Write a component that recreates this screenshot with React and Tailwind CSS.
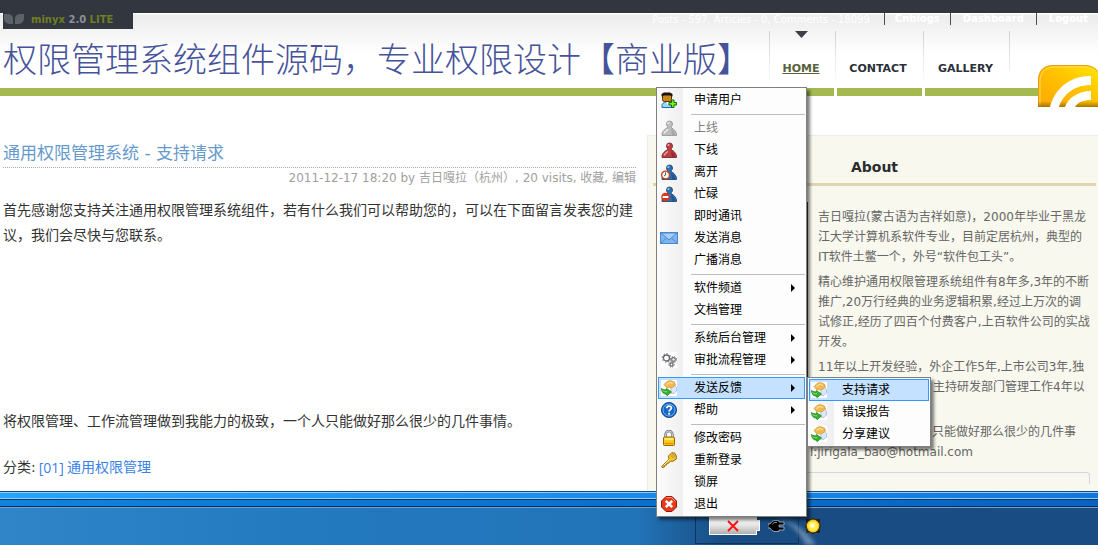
import React from "react";

function UserIcon({ light, mid, dark, children }) {
  return (
    <svg viewBox="0 0 16 16" className="h-4 w-4">
      <path
        d="M5.500 4a3 3 0 0 1 6 0c0 1.200-.5 2-1.200 2.600v1.200c2.700 1.200 4.200 3.200 5.200 5.700v2H1v-2c1-2.500 2.700-4.500 5.500-5.700V6.600C6 6 5.500 5.200 5.500 4z"
        fill={mid}
        stroke={dark}
        strokeWidth="0.8"
      />
      <path d="M7 4a1.500 1.500 0 0 1 1.500-1.600M3 13.500c1-2 2-3 4-4.200" stroke={light} strokeWidth="1.500" fill="none" />
      <path d="M10 9c2 1 3 2.500 4 4.500v1.500h-3z" fill={dark} fillOpacity="0.5" />
      {children}
    </svg>
  );
}

function AddUserIcon() {
  return (
    <svg viewBox="0 0 16 16" className="h-4 w-4">
      <path d="M1 15.500v-3L3.500 10h6l2 3v2.500z" fill="#9fd4f5" stroke="#1c6fb0" />
      <path d="M5 10l1.500 3L8 10z" fill="#fff" />
      <rect x="1.500" y="1.500" width="9" height="8" rx="2" fill="#c98a1c" stroke="#5a3200" />
      <path d="M.5 4.500V2L3 .500h6L11.500 2v2.500L9 3.500H3z" fill="#1d1408" />
      <path d="M10.500 8h2.500v2.500h2.500V13H13v2.500h-2.500V13H8v-2.500h2.500z" fill="#7dee1f" stroke="#0c6b0c" />
    </svg>
  );
}

function MailIcon() {
  return (
    <svg viewBox="0 0 18 12" className="h-3 w-[18px] shrink-0">
      <rect x=".5" y=".5" width="17" height="11" fill="#7fb6ee" stroke="#4a86cf" />
      <path d="M1 11l5.500-5M17 11l-5.500-5" fill="none" stroke="#4a86cf" />
      <path d="M1 1h16L9 8z" fill="#a5cff8" stroke="#4a86cf" />
    </svg>
  );
}

function GearsIcon() {
  return (
    <svg viewBox="0 0 16 16" className="h-4 w-4 bg-white" fill="none" stroke="#66666c">
      <circle cx="5.500" cy="6" r="3" strokeWidth="1.300" />
      <circle cx="5.500" cy="6" r="4.300" strokeWidth="1" strokeDasharray="1.600 1.700" />
      <circle cx="12.500" cy="7.500" r="1.800" strokeWidth="1.200" />
      <circle cx="12.500" cy="7.500" r="2.900" strokeWidth="1" strokeDasharray="1.200 1.100" />
      <circle cx="10.500" cy="12.500" r="1.600" strokeWidth="1.200" />
      <circle cx="10.500" cy="12.500" r="2.700" strokeWidth="1" strokeDasharray="1.200 1.100" />
    </svg>
  );
}

function FeedbackIcon() {
  return (
    <svg viewBox="0 0 16 16" className="h-4 w-4 bg-white">
      <path d="M10 8.500l3.500-3.500 2 2.500v3.500l-2.500 2.500-3.500-.5z" fill="#dbe7fa" stroke="#9cb3d6" strokeWidth="0.7" />
      <path d="M3 4.500L6 1.500 9 .500l4.500 1.500L14.500 5l-4 3-5-.5z" fill="#f2b950" stroke="#cf9636" strokeWidth="0.7" />
      <path d="M5.500 4.500l3-2 3.500 1" fill="none" stroke="#fbdf9c" strokeWidth="1.200" />
      <path d="M.5 8.500l1.500 1 3 .5.500-1.500L10.500 12l-4.500 3.700-.5-1.500C2.500 14.200.5 12 .5 8.500z" fill="#35b52c" stroke="#157a17" strokeWidth="0.7" />
      <path d="M1.500 10.500c1 1 2.500 1.300 4.500 1.300" fill="none" stroke="#8be87c" />
    </svg>
  );
}

function HelpIcon() {
  return (
    <svg viewBox="0 0 16 16" className="h-4 w-4">
      <circle cx="8" cy="8" r="7.500" fill="#1669c9" stroke="#0a4190" />
      <circle cx="8" cy="8" r="6" fill="none" stroke="#9cc9f5" strokeWidth="0.7" />
      <path d="M5.800 6.300c0-3 4.600-2.900 4.600-.3 0 1.600-2.300 1.800-2.300 3.500" fill="none" stroke="#fff" strokeWidth="1.700" />
      <rect x="7.200" y="10.800" width="1.800" height="1.800" fill="#fff" />
    </svg>
  );
}

function LockIcon() {
  return (
    <svg viewBox="0 0 16 16" className="h-4 w-4">
      <path d="M4.500 8V4.500a3.500 3.500 0 0 1 7 0V8" fill="none" stroke="#6d727a" strokeWidth="2.400" />
      <path d="M4.500 8V4.500a3.500 3.500 0 0 1 7 0V8" fill="none" stroke="#d5d9de" />
      <rect x="2.500" y="7" width="11" height="8.500" rx="1" fill="#fcc91d" stroke="#9a6a00" />
      <path d="M3.500 9h9" stroke="#fff09a" strokeWidth="1.500" />
      <path d="M3.500 13.500h9" stroke="#e29a0c" strokeWidth="1.500" />
    </svg>
  );
}

function KeyIcon() {
  return (
    <svg viewBox="0 0 16 16" className="h-4 w-4">
      <path d="M.7 14.500L8 7.300 7.500 4l3.300-3.300 3 .5L15.300 4v3L12 9.300l-2.500-.2-2 2.200-1.500-.2-.5 2-1.500.2-.8 1.800-2 .4z" fill="#f8c623" stroke="#8a5a00" strokeWidth="0.9" />
      <path d="M3 13l6-6" stroke="#fff0a0" />
      <circle cx="12" cy="4" r="1.200" fill="#fff" stroke="#8a5a00" strokeWidth="0.7" />
    </svg>
  );
}

function ExitIcon() {
  return (
    <svg viewBox="0 0 16 16" className="h-4 w-4">
      <path d="M5 .5h6L15.500 5v6L11 15.500H5L.5 11V5z" fill="#e83a1b" stroke="#9c1505" />
      <path d="M5.500 1.500h5l4 4" fill="none" stroke="#ff9c80" />
      <path d="M4.800 4.800l6.400 6.400M11.200 4.800l-6.400 6.400" stroke="#fff" strokeWidth="2.600" />
    </svg>
  );
}

function RssIcon() {
  return (
    <svg viewBox="0 0 60 42" className="h-[42px] w-[60px]">
      <defs>
        <linearGradient id="rss" x1="0" y1="1" x2="1" y2="0">
          <stop offset="0" stopColor="#ffa800" />
          <stop offset="0.5" stopColor="#ffbf00" />
          <stop offset="1" stopColor="#ffe600" />
        </linearGradient>
        <linearGradient id="rssShade" x1="0" y1="0" x2="0" y2="1">
          <stop offset="0" stopColor="#7a5200" stopOpacity="0" />
          <stop offset="1" stopColor="#7a5200" stopOpacity="0.65" />
        </linearGradient>
      </defs>
      <path d="M0 42V14Q1 1 14 0h34q9 1 12 6v36z" fill="url(#rss)" />
      <path d="M.5 42V14Q1.500 1.500 14 .5h34q8 1 11.500 6" fill="none" stroke="#f09a18" />
      <path d="M2 42V15Q3 3 15 2h32q8 1 12 7" fill="none" stroke="#ffdc5a" />
      <path d="M0 36h60v6H0z" fill="url(#rssShade)" />
      <path d="M12 42C16 25 32 10 53 11v9C37 20 25 29 21 42z" fill="#fff" />
      <path d="M27 42c3-9 13-16 26-16v9c-8 0-13 2-16 7z" fill="#fff" />
    </svg>
  );
}

const menuItems = [
  { label: "申请用户", icon: <AddUserIcon /> },
  { separator: true },
  { label: "上线", icon: <UserIcon light="#eeeeee" mid="#bdbdbd" dark="#909090" />, disabled: true },
  { label: "下线", icon: <UserIcon light="#f0a0a0" mid="#bd3d42" dark="#701a20" /> },
  {
    label: "离开",
    icon: (
      <UserIcon light="#8fd0e8" mid="#2f6db0" dark="#173c70">
        <circle cx="4.500" cy="11" r="3.900" fill="#fff" stroke="#c9400f" strokeWidth="1.300" />
        <path d="M4.500 8.500V11l-1.500 1" fill="none" stroke="#333" strokeWidth="0.9" />
      </UserIcon>
    ),
  },
  {
    label: "忙碌",
    icon: (
      <UserIcon light="#8fd0e8" mid="#2f6db0" dark="#173c70">
        <circle cx="4.500" cy="11" r="4.300" fill="#d93a1a" />
        <rect x="1.700" y="10" width="5.600" height="2" fill="#fff" />
      </UserIcon>
    ),
  },
  { label: "即时通讯" },
  { label: "发送消息", icon: <MailIcon /> },
  { label: "广播消息" },
  { separator: true },
  { label: "软件频道", submenu: true },
  { label: "文档管理" },
  { separator: true },
  { label: "系统后台管理", submenu: true },
  { label: "审批流程管理", icon: <GearsIcon />, submenu: true },
  { separator: true },
  { label: "发送反馈", icon: <FeedbackIcon />, submenu: true, active: true },
  { label: "帮助", icon: <HelpIcon />, submenu: true },
  { separator: true },
  { label: "修改密码", icon: <LockIcon /> },
  { label: "重新登录", icon: <KeyIcon /> },
  { label: "锁屏" },
  { label: "退出", icon: <ExitIcon /> },
];

const feedbackItems = [
  { label: "支持请求", icon: <FeedbackIcon />, active: true },
  { label: "错误报告", icon: <FeedbackIcon /> },
  { label: "分享建议", icon: <FeedbackIcon /> },
];

function Menu({ items, className, iconClassName }) {
  return (
    <div
      role="menu"
      className={`absolute border border-[#808080] bg-[#fdfdfd] bg-[linear-gradient(90deg,#fcfcfc,#efefef)] bg-[length:26px_100%] bg-no-repeat p-px text-xs shadow-[3px_3px_3px_rgba(0,0,0,0.5)] ${className}`}
    >
      {items.map((item, i) =>
        item.separator ? (
          <div key={i} className="flex h-1.5 items-center pl-[33px]">
            <div className="h-px w-full bg-[#bdbdbd]" />
          </div>
        ) : (
          <button
            key={i}
            role="menuitem"
            disabled={item.disabled}
            className={`flex h-[22px] w-full items-center border text-left ${
              item.active ? "border-[#3399ff] bg-[#c4e1ff]" : "border-transparent"
            } ${item.disabled ? "text-[#808080]" : "text-black"}`}
          >
            <span className={`flex shrink-0 justify-center ${iconClassName}`}>{item.icon}</span>
            <span className="flex-1 whitespace-nowrap">{item.label}</span>
            {item.submenu && (
              <svg viewBox="0 0 4 8" className="mr-[9px] h-2 w-1">
                <path d="M0 0l4 4-4 4z" fill="#000" />
              </svg>
            )}
          </button>
        )
      )}
    </div>
  );
}

function NavDivider() {
  return (
    <div className="flex w-[3px] justify-center pb-3 pt-0.5">
      <div className="w-px bg-linear-to-b from-[#d0d1d6] to-white" />
    </div>
  );
}

function Header() {
  return (
    <header>
      <div className="h-[13px] bg-[#32363f]" />
      <div className="bg-[linear-gradient(180deg,#ffffff_1px,#ececec_2px,#ffffff_40px)]">
        <div className="flex h-4 items-start justify-between">
          <div className="ml-[3px] flex h-4 w-[130px] items-center gap-1.5 bg-[#32363f] pb-1 text-[10px] font-bold">
            <svg viewBox="0 0 22 10" className="h-2.5 w-[22px]">
              <path d="M1 0h5q4 1 4 5v5H6Q1 9 1 4zM21 0h-5q-4 1-4 5v5h4q5-1 5-6z" fill="#5d6169" />
            </svg>
            <span className="whitespace-nowrap text-[#6f7f22]">
              minyx <span className="text-[#8d9097]">2.0</span> LITE
            </span>
          </div>
          <div className="flex h-3 items-center whitespace-nowrap text-[10px] text-white">
            <span className="mr-3.5">Posts - 597, Articles - 0, Comments - 18099</span>
            <a href="#" className="border-l border-[#4a4d57] pl-2.5 pr-2.5 font-bold leading-3">Cnblogs</a>
            <a href="#" className="border-l border-[#4a4d57] pl-3 pr-3 font-bold leading-3">Dashboard</a>
            <a href="#" className="border-l border-[#4a4d57] pl-3 pr-2.5 font-bold leading-3">Logout</a>
          </div>
        </div>
        <div className="flex h-[67px]">
          <h1 className="min-w-0 flex-1 whitespace-nowrap border-b-8 border-[#a4ba50] pl-[3px] pt-1.5 text-[34px] font-light leading-[50px] text-[#46539a]">
            权限管理系统组件源码，专业权限设计【商业版】
          </h1>
          <nav className="flex text-[11px] font-bold text-[#2c303a]">
            <div className="w-px border-b-8 border-[#a4ba50] pt-0.5">
              <div className="h-14 bg-linear-to-b from-[#d0d1d6] to-white" />
            </div>
            <a href="#" className="flex w-16 flex-col items-center border-b-8 border-[#a4ba50] pr-0.5 pt-0.5 text-[#59613a]">
              <svg viewBox="0 0 13 7" className="h-[7px] w-[13px]">
                <path d="M0 0h13L6.500 7z" fill="#3c404b" />
              </svg>
              <span className="pt-[23px] underline">HOME</span>
            </a>
            <NavDivider />
            <a href="#" className="flex w-[85px] justify-center border-b-8 border-[#a4ba50] pr-[3px] pt-8">CONTACT</a>
            <NavDivider />
            <a href="#" className="flex w-[84px] justify-center border-b-8 border-[#a4ba50] pr-[3px] pt-8">GALLERY</a>
            <div className="w-[89px] border-b-8 border-[#a4ba50] pt-0.5">
              <div className="h-10 w-px bg-linear-to-b from-[#d0d1d6] to-[#eeeeee]" />
            </div>
          </nav>
        </div>
      </div>
    </header>
  );
}

function Article() {
  return (
    <article className="min-w-0 flex-1 pl-[3px] pr-[11px] pt-11 text-sm leading-[25px] text-[#333333]">
      <h2 className="border-b border-dotted border-[#aaaaaa] text-[17px] leading-[27px] text-[#6699cc]">
        通用权限管理系统 - 支持请求
      </h2>
      <p className="whitespace-nowrap text-right text-xs leading-5 text-[#a0a0a0]">
        2011-12-17 18:20 by 吉日嘎拉（杭州）, 20 visits, <a href="#">收藏</a>, <a href="#">编辑</a>
      </p>
      <p className="pt-2.5">
        首先感谢您支持关注通用权限管理系统组件，若有什么我们可以帮助您的，可以在下面留言发表您的建议，我们会尽快与您联系。
      </p>
      <p className="pt-[161px]">将权限管理、工作流管理做到我能力的极致，一个人只能做好那么很少的几件事情。</p>
      <p className="flex gap-[3px] pt-[21px]">
        分类:
        <a href="#" className="flex gap-[3px] text-[#3b82e8]">
          <span className="font-['Open_Sans']">[01]</span>通用权限管理
        </a>
      </p>
    </article>
  );
}

function Sidebar() {
  return (
    <aside className="w-[451px] border-l border-t border-[#ececec] bg-[#f8f8ee] pl-[5px] pr-0.5 pt-[18px] text-xs leading-5 text-[#666666]">
      <h3 className="border-b-[3px] border-[#dcd5ae] pb-1 pt-px text-center text-sm leading-6 font-bold text-[#2c2c2c]">About</h3>
      <div className="flex gap-2.5 pt-4">
        <div className="ml-9 h-[180px] w-[119px] shrink-0 bg-[#2c3530]" />
        <div className="h-[220px] space-y-[5px] whitespace-nowrap pt-[5px]">
          <p>
            吉日嘎拉(蒙古语为吉祥如意)，2000年毕业于黑龙<br />
            江大学计算机系软件专业，目前定居杭州，典型的<br />
            IT软件土鳖一个，外号“软件包工头”。
          </p>
          <p>
            精心维护通用权限管理系统组件有8年多,3年的不断<br />
            推广,20万行经典的业务逻辑积累,经过上万次的调<br />
            试修正,经历了四百个付费客户,上百软件公司的实战<br />
            开发。
          </p>
          <p>
            11年以上开发经验，外企工作5年,上市公司3年,独<br />
            <span className="pl-[115px]">主持研发部门管理工作4年以</span>
          </p>
        </div>
      </div>
      <div className="whitespace-nowrap pr-5 text-right">
        <p>只能做好那么很少的几件事</p>
        <p className="pr-[103px]">l:jirigala_bao@hotmail.com</p>
      </div>
      <div className="ml-5 mr-1.5 mt-2.5 h-3 rounded-tr border-r border-t border-[#cfd6e6]" />
    </aside>
  );
}

function Taskbar() {
  return (
    <footer className="relative">
      <div className="h-px bg-[#154c80]" />
      <div className="h-[7px] border-y border-[#8fcdf8] bg-linear-to-r from-[#25a5ff] to-[#1476dc]" />
      <div className="h-px bg-[#0d3762]" />
      <div className="h-1.5 bg-linear-to-r from-[#0e83e0] to-[#0962c2]" />
      <div className="h-px bg-[#0b2c50]" />
      <div className="flex h-[38px] border-t border-[#6aa3d4] bg-[linear-gradient(90deg,#2f85c8,#2379be_30%,#2274b8_58%,#184c82_66%,#184c82)]">
        <div className="flex-1" />
        <div className="flex h-9 w-[104px] items-center border-x border-b border-[#0e355f] pl-3">
          <svg viewBox="0 0 52 20" className="h-5 w-[52px] shrink-0">
            <defs>
              <linearGradient id="battery" x1="0" y1="0" x2="0" y2="1">
                <stop offset="0" stopColor="#fff" />
                <stop offset="0.5" stopColor="#e2e2e2" />
                <stop offset="1" stopColor="#a8a8a8" />
              </linearGradient>
            </defs>
            <path d="M1 1h48v3h3v11h-3v4H1z" fill="url(#battery)" />
            <path d="M1.500 1v17.500h47V14.500h3v-10" fill="none" stroke="#fff" />
            <path d="M20 5l10 10M30 5L20 15" stroke="#f11" strokeWidth="2" />
          </svg>
          <svg viewBox="0 0 17 12" className="ml-2 h-3 w-[17px] shrink-0">
            <path d="M0 4h2l2-2.500L6 .5h5V2h5v3h-5v2h5v3h-5v1.500H6L4 10.500 2 8H0z" fill="#000" stroke="#aebfd0" strokeWidth="0.8" />
            <path d="M4.500 4.500L6 2.500h3" fill="none" stroke="#888" />
          </svg>
        </div>
        <div className="w-[299px] pl-1.5 pt-2.5">
          <svg viewBox="0 0 16 16" className="h-4 w-4">
            <path d="M1 1h2l2 .5L8 0l3 1.500L13 1h2v2l-.5 2L16 8l-1.500 3 .5 2v2h-2l-2-.5L8 16l-3-1.500-2 .5H1v-2l.5-2L0 8l1.500-3L1 3z" fill="#2a1e00" />
            <circle cx="8" cy="8" r="6.400" fill="#ffc61f" />
            <circle cx="8" cy="8" r="4.800" fill="#fff04f" />
            <circle cx="7.500" cy="7.500" r="2.300" fill="#fffbd0" />
          </svg>
        </div>
      </div>
      {/* wallpaper glare */}
      <svg viewBox="0 0 50 30" className="absolute bottom-0 right-[276px] h-[30px] w-[50px] blur-[2px]">
        <path d="M4 2Q24 10 34 30h10Q32 10 4 2z" fill="#fff" fillOpacity="0.35" />
      </svg>
    </footer>
  );
}

export default function App() {
  return (
    <div className="relative overflow-hidden bg-white font-['DejaVu_Sans','Noto_Sans_CJK_SC',sans-serif]">
      <Header />
      <a href="#" aria-label="RSS" className="absolute right-0 top-[65px]">
        <RssIcon />
      </a>
      <main className="flex min-h-[395px] items-stretch">
        <div className="flex min-w-0 flex-1">
          <Article />
        </div>
        <div className="flex pt-[39px]">
          <Sidebar />
        </div>
      </main>
      <Taskbar />
      <Menu items={menuItems} className="right-[291px] top-[87px] w-[151px]" iconClassName="mr-[15px] w-5" />
      <Menu items={feedbackItems} className="right-[167px] top-[377px] w-[124px]" iconClassName="mr-3.5 w-[18px]" />
    </div>
  );
}
